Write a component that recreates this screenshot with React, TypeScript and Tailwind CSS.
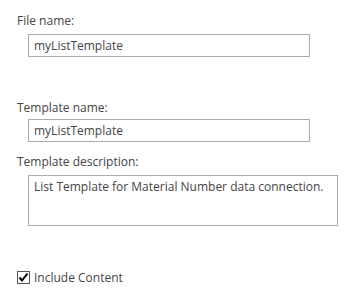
import React from "react";

const App: React.FC = () => {
  return (
    <div
      className="w-[354px] h-[300px] bg-white pl-[17px] pt-[12px] text-[12px] leading-[17px] text-[#444444]"
      style={{ fontFamily: '"Open Sans", "Noto Sans", sans-serif' }}
    >
      <div>File name:</div>
      <input
        className="block mt-[5px] ml-[11px] w-[282px] h-[23px] border border-[#ababab] px-[5px] text-[12px] text-[#444444] outline-none"
        defaultValue="myListTemplate"
      />

      <div className="mt-[42px]">Template name:</div>
      <input
        className="block mt-[3px] ml-[11px] w-[282px] h-[23px] border border-[#ababab] px-[5px] text-[12px] text-[#444444] outline-none"
        defaultValue="myListTemplate"
      />

      <div className="mt-[11px]">Template description:</div>
      <textarea
        className="block mt-[5px] ml-[11px] w-[310px] h-[51px] border border-[#ababab] pl-[5px] pr-[2px] pt-[2px] text-[12px] leading-[17px] text-[#444444] outline-none resize-none overflow-hidden"
        defaultValue="List Template for Material Number data connection."
      />

      <label className="mt-[43px] flex items-center gap-[4px]">
        <span className="w-[13px] h-[13px] border border-[#555555] bg-white flex items-center justify-center">
          <svg width="11" height="11" viewBox="0 0 11 11">
            <path d="M1.5 5.5 L4 8.5 L9.5 1.5" fill="none" stroke="#000" strokeWidth="2" />
          </svg>
        </span>
        <span>Include Content</span>
      </label>
    </div>
  );
};

export default App;
